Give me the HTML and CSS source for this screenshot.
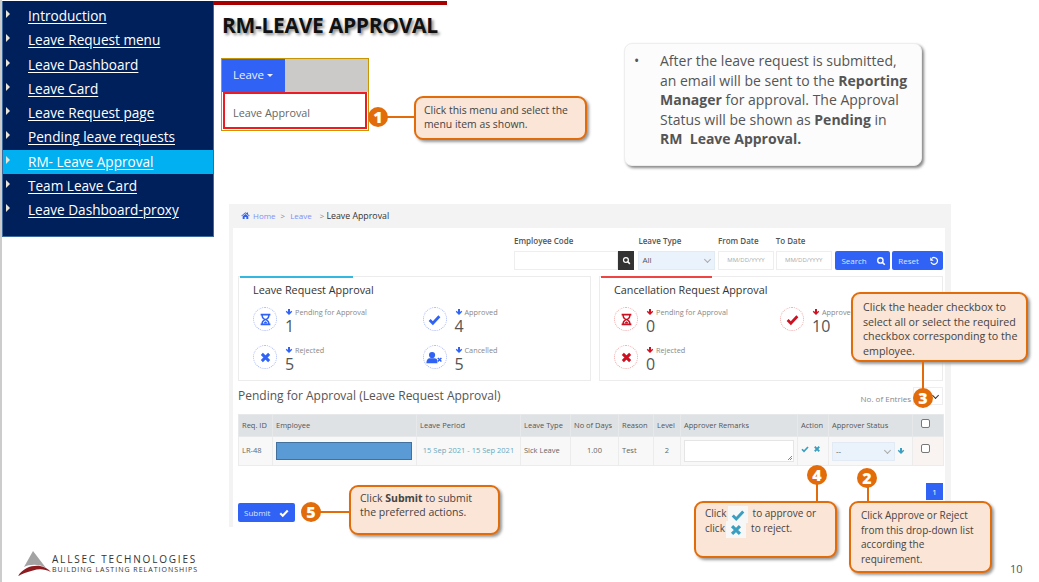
FILE: index.html
```html
<!DOCTYPE html>
<html lang="en">
<head>
    <meta charset="UTF-8">
    <meta name="viewport" content="width=device-width, initial-scale=1.0">
    <title>RM-Leave Approval</title>
    <link rel="stylesheet" href="styles.css">
</head>
<body>
    <svg class="sprite" width="0" height="0">
        <symbol id="i-check" viewBox="0 0 16 16"><path d="M2 8.500l4 4 8-8.500" fill="none" stroke="currentColor" stroke-width="3.400"/></symbol>
        <symbol id="i-times" viewBox="0 0 16 16"><path d="M3.500 3.500l9 9M12.500 3.500l-9 9" fill="none" stroke="currentColor" stroke-width="3.600"/></symbol>
        <symbol id="i-down" viewBox="0 0 16 16"><path d="M8 14L1.500 7.500 3.500 5.500 6 8V2h4v6l2.500-2.500 2 2z" fill="currentColor"/></symbol>
        <symbol id="i-hour" viewBox="0 0 16 16"><path d="M2 1h12v2h-1c0 3-1.500 4-3 5 1.500 1 3 2 3 5h1v2H2v-2h1c0-3 1.500-4 3-5-1.500-1-3-2-3-5H2zM4.800 3c0 2.500 1.700 3.500 3.200 4.200 1.500-.7 3.200-1.700 3.200-4.200zM8 8.900c-1.500.8-3.200 2-3.200 4.100h6.400c0-2.100-1.700-3.300-3.200-4.100z" fill="currentColor" fill-rule="evenodd"/><path d="M5.800 13c0-1.300 1-2.200 2.200-2.900 1.200.7 2.200 1.600 2.200 2.900z" fill="currentColor"/></symbol>
        <symbol id="i-search" viewBox="0 0 16 16"><circle cx="7" cy="7" r="4.300" fill="none" stroke="currentColor" stroke-width="2.200"/><path d="M10 10l4 4" stroke="currentColor" stroke-width="2.600"/></symbol>
        <symbol id="i-undo" viewBox="0 0 16 16"><path d="M4.500 3.800A5.400 5.400 0 1 1 3.200 10" fill="none" stroke="currentColor" stroke-width="2"/><path d="M2 2v5.500h5.500z" fill="currentColor"/></symbol>
        <symbol id="i-home" viewBox="0 0 16 16"><path d="M8 2L0.500 8.500l1 1L8 4l6.500 5.500 1-1-3-2.600V2.500h-2v1.700z" fill="currentColor"/><path d="M3 9.500L8 5.300l5 4.200V14H9.500v-3.500h-3V14H3z" fill="currentColor"/></symbol>
        <symbol id="i-user-x" viewBox="0 0 20 16"><circle cx="7" cy="5" r="3.800" fill="currentColor"/><path d="M0 15c0-4 2-6 4-6h6c2 0 3 1 3.500 2.500V15z" fill="currentColor"/><path d="M14 8.500l4.500 4.500M18.500 8.500L14 13" stroke="currentColor" stroke-width="1.800"/></symbol>
    </svg>

    <div class="slide">
        <nav class="side">
            <ul>
                <li><a>Introduction</a></li>
                <li><a>Leave Request menu</a></li>
                <li><a>Leave Dashboard</a></li>
                <li><a>Leave Card</a></li>
                <li><a>Leave Request page</a></li>
                <li><a>Pending leave requests</a></li>
                <li class="active"><a>RM- Leave Approval</a></li>
                <li><a>Team Leave Card</a></li>
                <li><a>Leave Dashboard-proxy</a></li>
            </ul>
        </nav>
        <div class="topbar"></div>
        <h1 class="title">RM-LEAVE APPROVAL</h1>

        <div class="menu-shot">
            <div class="menu-top">
                <span class="menu-btn">Leave <i class="caret"></i></span>
            </div>
            <div class="menu-item">Leave Approval</div>
        </div>

        <div class="info">
            <span class="dot">&bull;</span>
            <p>After the leave request is submitted,<br>an email will be sent to the <b>Reporting</b><br><b>Manager</b> for approval. The Approval<br>Status will be shown as <b>Pending</b> in<br><b>RM&nbsp; Leave Approval.</b></p>
        </div>

        <div class="app">
            <div class="crumbs">
                <svg class="ic-home"><use href="#i-home"/></svg>
                <a>Home</a><span class="sep">&gt;</span><a>Leave</a><span class="sep sep-2">&gt;</span><span class="here">Leave Approval</span>
            </div>
            <div class="panel">
                <div class="filters">
                    <div class="fld fld-code">
                        <label>Employee Code</label>
                        <div class="joined"><span class="inp"></span><span class="dark-btn"><svg><use href="#i-search"/></svg></span></div>
                    </div>
                    <div class="fld fld-type">
                        <label>Leave Type</label>
                        <span class="inp sel">All<i class="chev"></i></span>
                    </div>
                    <div class="fld fld-date">
                        <label>From Date</label>
                        <span class="inp date">MM/DD/YYYY</span>
                    </div>
                    <div class="fld fld-date">
                        <label>To Date</label>
                        <span class="inp date">MM/DD/YYYY</span>
                    </div>
                    <span class="btn btn-search">Search <svg><use href="#i-search"/></svg></span>
                    <span class="btn btn-reset">Reset <svg><use href="#i-undo"/></svg></span>
                </div>

                <div class="cards">
                    <section class="card card-blue">
                        <h3>Leave Request Approval</h3>
                        <div class="stats">
                            <div class="stat"><span class="ring"><svg><use href="#i-hour"/></svg></span><div><small><svg><use href="#i-down"/></svg>Pending for Approval</small><strong>1</strong></div></div>
                            <div class="stat"><span class="ring"><svg><use href="#i-check"/></svg></span><div><small><svg><use href="#i-down"/></svg>Approved</small><strong>4</strong></div></div>
                            <div class="stat"><span class="ring"><svg><use href="#i-times"/></svg></span><div><small><svg><use href="#i-down"/></svg>Rejected</small><strong>5</strong></div></div>
                            <div class="stat"><span class="ring"><svg class="wide"><use href="#i-user-x"/></svg></span><div><small><svg><use href="#i-down"/></svg>Cancelled</small><strong>5</strong></div></div>
                        </div>
                    </section>
                    <section class="card card-red">
                        <h3>Cancellation Request Approval</h3>
                        <div class="stats">
                            <div class="stat"><span class="ring"><svg><use href="#i-hour"/></svg></span><div><small><svg><use href="#i-down"/></svg>Pending for Approval</small><strong>0</strong></div></div>
                            <div class="stat"><span class="ring"><svg><use href="#i-check"/></svg></span><div><small><svg><use href="#i-down"/></svg>Approved</small><strong>10</strong></div></div>
                            <div class="stat"><span class="ring"><svg><use href="#i-times"/></svg></span><div><small><svg><use href="#i-down"/></svg>Rejected</small><strong>0</strong></div></div>
                        </div>
                    </section>
                </div>

                <div class="list-head">
                    <h2>Pending for Approval (Leave Request Approval)</h2>
                    <div class="entries">No. of Entries <span class="entries-sel"><i class="chev chev-dark"></i></span></div>
                </div>

                <table class="grid">
                    <colgroup>
                        <col class="c1"><col class="c2"><col class="c3"><col class="c4"><col class="c5"><col class="c6"><col class="c7"><col class="c8"><col class="c9"><col class="c10"><col class="c11">
                    </colgroup>
                    <thead>
                        <tr>
                            <th>Req. ID</th><th>Employee</th><th>Leave Period</th><th>Leave Type</th><th>No of Days</th><th>Reason</th><th>Level</th><th>Approver Remarks</th><th>Action</th><th>Approver Status</th><th class="mid cb-cell"><i class="cb"></i></th>
                        </tr>
                    </thead>
                    <tbody>
                        <tr>
                            <td>LR-48</td>
                            <td class="emp"><span class="mask"></span></td>
                            <td class="period">15 Sep 2021 - 15 Sep 2021</td>
                            <td>Sick Leave</td>
                            <td class="mid">1.00</td>
                            <td>Test</td>
                            <td class="mid">2</td>
                            <td class="rem"><span class="area"></span></td>
                            <td class="act"><svg><use href="#i-check"/></svg><svg><use href="#i-times"/></svg></td>
                            <td class="st"><span class="inp sel st-sel">--<i class="chev"></i></span><svg><use href="#i-down"/></svg></td>
                            <td class="mid pink cb-cell"><i class="cb"></i></td>
                        </tr>
                    </tbody>
                </table>

                <div class="pager"><span>1</span></div>
                <span class="btn btn-submit">Submit <svg><use href="#i-check"/></svg></span>
            </div>
        </div>

        <div class="callout c-1">Click this menu and select the menu item as shown.</div>
        <div class="callout c-3">Click the header checkbox to<br>select all or select the required<br>checkbox corresponding to the<br>employee.</div>
        <div class="callout c-4">
            <div class="line">Click <span class="chip"><svg><use href="#i-check"/></svg></span> to approve or</div>
            <div class="line">click <span class="chip"><svg><use href="#i-times"/></svg></span> to reject.</div>
        </div>
        <div class="callout c-2">Click Approve or Reject from this drop-down list according the requirement.</div>
        <div class="callout c-5">Click <b>Submit</b> to submit<br>the preferred actions.</div>

        <i class="wire w-1"></i><i class="wire w-3"></i><i class="wire w-4"></i><i class="wire w-2"></i><i class="wire w-5"></i>
        <span class="badge b-1">1</span>
        <span class="badge b-2">2</span>
        <span class="badge b-3">3</span>
        <span class="badge b-4">4</span>
        <span class="badge b-5">5</span>

        <div class="logo">
            <svg width="34" height="27" viewBox="0 0 34 27">
                <path d="M15 1L28 18C22 14 12 14 6 17z" fill="#a3a3a3"/>
                <path d="M0 26C5 18 14 15 22 16c4 .5 8 2.500 11 6-6-3-12-3.500-18-1.500C9 22 4 24 0 26z" fill="#8c1c20"/>
            </svg>
            <div class="logo-text">
                <div class="logo-name">ALLSEC TECHNOLOGIES</div>
                <div class="logo-tag">BUILDING LASTING RELATIONSHIPS</div>
            </div>
        </div>
        <div class="page-no">10</div>
    </div>
</body>
</html>
```

FILE: styles.css
```css
* {
    box-sizing: border-box;
}

body {
    margin: 0;
    background: white;
    font-family: "Open Sans", sans-serif;
    color: #555;
}

.sprite {
    position: absolute;
}

.slide {
    position: relative;
    width: 1039px;
    height: 582px;
    overflow: hidden;
    border-left: 2px solid #ccc;
}

/* left menu */
.side {
    position: absolute;
    left: 0;
    top: 1px;
    width: 212px;
    height: 236px;
    background: #00205c;
    border: 1px solid #3d6a9c;
    border-top: none;
}

.side ul {
    list-style: none;
    margin: 0;
    padding: 3px 0 0 0;
}

.side li {
    position: relative;
    height: 24.25px;
    padding-left: 25px;
    font-size: 13.6px;
    line-height: 24px;
    color: white;
}

.side li:before {
    content: "";
    position: absolute;
    left: 3px;
    top: 6px;
    border-left: 4px solid #e8e4d8;
    border-top: 4px solid transparent;
    border-bottom: 4px solid transparent;
}

.side li a {
    text-decoration: underline;
    text-underline-offset: 2px;
}

.side li.active {
    background: #00b0f0;
}

.topbar {
    position: absolute;
    left: 211px;
    top: 1px;
    width: 234px;
    height: 4px;
    background: #a80000;
}

.title {
    position: absolute;
    left: 220px;
    top: 10px;
    margin: 0;
    font-size: 21px;
    font-weight: 700;
    line-height: 30px;
    letter-spacing: -0.3px;
    color: #111;
    text-shadow: 2px 2px 3px #888;
}

/* cropped menu picture */
.menu-shot {
    position: absolute;
    left: 219px;
    top: 58px;
    width: 148px;
    height: 73px;
    border: 1px solid #c89600;
    background: white;
}

.menu-top {
    height: 33px;
    background: #cbcac8;
}

.menu-btn {
    display: inline-block;
    width: 63px;
    height: 33px;
    padding-left: 11px;
    background: #2f62f5;
    color: #eef;
    font-size: 11.5px;
    line-height: 31px;
}

.caret {
    display: inline-block;
    vertical-align: middle;
    border-top: 3px solid #eef;
    border-left: 3px solid transparent;
    border-right: 3px solid transparent;
}

.menu-item {
    height: 37px;
    margin: 0 1px;
    padding-left: 8px;
    border: 2px solid #ed1c24;
    font-size: 10.8px;
    line-height: 38px;
    color: #666;
}

/* info note */
.info {
    position: absolute;
    left: 622px;
    top: 43px;
    width: 298px;
    height: 123px;
    display: flex;
    padding: 7px 4px 0 9px;
    border: 1px solid #eee;
    border-radius: 8px;
    background: #fcfcfc;
    box-shadow: 2px 2px 3px #888;
    font-size: 14px;
    line-height: 19.5px;
    color: #555;
    white-space: nowrap;
}

.info .dot {
    width: 26px;
    flex: none;
}

.info p {
    margin: 0;
}

/* app screenshot */
.app {
    position: absolute;
    left: 227px;
    top: 204px;
    width: 722px;
    height: 323px;
    background: #f3f3f3;
    padding-left: 4px;
    padding-right: 6px;
    display: flex;
    flex-direction: column;
}

.crumbs {
    height: 23px;
    margin-bottom: 1px;
    display: flex;
    align-items: center;
    padding-left: 8px;
    font-size: 8px;
    color: #88f;
}

.crumbs a {
    color: #7f8ff7;
}

.ic-home {
    width: 9px;
    height: 9px;
    margin-right: 3px;
    color: #2f62f5;
}

.sep {
    margin: 0 5px;
    color: #888;
}

.sep-2 {
    margin-left: 8px;
    margin-right: 2px;
}

.here {
    color: #333;
    font-size: 8.8px;
}

.panel {
    position: relative;
    flex: 1;
    background: white;
    padding: 0 2px 0 5px;
}

.filters {
    height: 48px;
    display: flex;
    align-items: flex-end;
    padding: 0 0 6px 276px;
    font-size: 8px;
}

.fld label {
    display: block;
    margin-bottom: 5px;
    font-size: 8px;
    line-height: 10px;
    font-weight: 600;
    color: #555;
}

.fld-code {
    width: 125px;
}

.fld-type {
    width: 80px;
}

.fld-date {
    width: 58px;
}

.joined {
    display: flex;
}

.inp {
    display: block;
    height: 19px;
    border: 1px solid #eee;
    background: white;
    font-size: 8px;
    line-height: 15px;
}

.joined .inp {
    width: 104px;
}

.dark-btn {
    width: 16px;
    height: 19px;
    background: #333;
    color: white;
    display: flex;
    align-items: center;
    justify-content: center;
}

.dark-btn svg {
    width: 9px;
    height: 9px;
}

.sel {
    position: relative;
    width: 77px;
    padding-left: 3px;
    background: #eaf2fb;
    border-color: #e2eaf5;
    color: #555;
}

.chev {
    position: absolute;
    right: 4px;
    top: 5px;
    width: 5px;
    height: 5px;
    border-right: 1px solid #aaa;
    border-bottom: 1px solid #aaa;
    transform: rotate(45deg);
}

.date {
    width: 56px;
    text-align: center;
    font-size: 6px;
    line-height: 17px;
    color: #aaa;
}

.btn {
    display: flex;
    align-items: center;
    justify-content: space-between;
    height: 19px;
    padding: 0 4px 0 6px;
    border-radius: 2px;
    background: #2f62f5;
    color: #dde4ff;
    font-size: 8px;
}

.btn svg {
    width: 10px;
    height: 10px;
    color: white;
}

.btn-search {
    width: 55px;
    margin-left: 2px;
}

.btn-reset {
    width: 51px;
    margin-left: 2px;
}

/* stat cards */
.cards {
    display: flex;
    gap: 8px;
}

.card {
    position: relative;
    height: 105px;
    border: 1px solid #ececec;
}

.card:before {
    content: "";
    position: absolute;
    left: 1px;
    top: -1px;
    width: 113px;
    height: 2px;
    background: #35b8e0;
}

.card-blue {
    width: 353px;
    padding-left: 14px;
}

.card-red {
    width: 344px;
    padding-left: 14px;
}

.card-red:before {
    background: #ee4444;
    width: 111px;
}

.card h3 {
    margin: 0;
    padding-top: 5px;
    font-size: 10.8px;
    line-height: 15px;
    font-weight: 400;
    color: #333;
}

.stats {
    display: grid;
    grid-auto-rows: 38px;
    padding-top: 10px;
}

.card-blue .stats {
    grid-template-columns: 169.5px 140px;
}

.card-red .stats {
    grid-template-columns: 166px 140px;
}

.stat {
    display: flex;
    gap: 8px;
}

.ring {
    width: 24px;
    height: 24px;
    flex: none;
    display: flex;
    align-items: center;
    justify-content: center;
    border: 1px dotted #a8b8f8;
    border-radius: 50%;
    color: #2f62f5;
}

.ring svg {
    width: 13px;
    height: 13px;
}

.ring svg.wide {
    width: 17px;
}

.card-red .ring {
    border-color: #f0a8a8;
    color: #cc1122;
}

.stat small {
    display: flex;
    align-items: center;
    gap: 2px;
    height: 10px;
    font-size: 7.3px;
    line-height: 10px;
    color: #888;
}

.stat small svg {
    width: 8px;
    height: 8px;
    color: #2f62f5;
}

.card-red small svg {
    color: #cc1122;
}

.stat strong {
    display: block;
    font-size: 16px;
    line-height: 18px;
    font-weight: 400;
    color: #555;
}

/* list */
.list-head {
    height: 33px;
    display: flex;
    justify-content: space-between;
    align-items: flex-end;
    padding-bottom: 10px;
}

.list-head h2 {
    margin: 0;
    font-size: 12px;
    line-height: 16px;
    font-weight: 400;
    color: #555;
}

.entries {
    display: flex;
    align-items: flex-start;
    font-size: 8px;
    color: #888;
}

.entries-sel {
    position: relative;
    display: block;
    width: 30px;
    height: 18px;
    margin: -6px 0 -4px 2px;
    border: 1px solid #eee;
}

.chev-dark {
    border-color: #333;
}

.grid {
    width: 705px;
    border-collapse: collapse;
    table-layout: fixed;
    font-size: 7.5px;
}

.c1 { width: 34px; }
.c2 { width: 144px; }
.c3 { width: 104px; }
.c4 { width: 50px; }
.c5 { width: 48px; }
.c6 { width: 35px; }
.c7 { width: 27px; }
.c8 { width: 117px; }
.c9 { width: 31px; }
.c10 { width: 84px; }
.c11 { width: 31px; }

.grid th {
    height: 22px;
    padding: 0 3px 2px 3px;
    background: #dfe2e5;
    font-weight: 400;
    text-align: left;
    color: #555;
    border: 1px solid #e6e8ea;
    white-space: nowrap;
    overflow: hidden;
}

.grid td {
    height: 29px;
    padding: 0 3px 2px 3px;
    background: #f8f8f8;
    color: #666;
    border: 1px solid #ececec;
    white-space: nowrap;
    overflow: hidden;
}

.grid .mid {
    text-align: center;
}

.grid td.pink {
    background: #f9f3f2;
}

.grid .cb-cell {
    padding: 0 6px 6px 0;
}

.cb {
    display: inline-block;
    width: 9px;
    height: 9px;
    vertical-align: middle;
    border: 1px solid #777;
    border-radius: 2px;
    background: white;
}

.grid .emp {
    padding: 0 3px;
}

.mask {
    display: block;
    width: 136px;
    height: 18px;
    background: #5b9bd5;
    border: 1px solid #41719c;
}

.grid .period {
    color: #6aa8c0;
    text-align: center;
}

.grid .rem {
    padding: 0 3px;
}

.area {
    position: relative;
    display: block;
    height: 22px;
    border: 1px solid #e5e5e5;
    background: white;
}

.area:after {
    content: "";
    position: absolute;
    right: 1px;
    bottom: 1px;
    width: 5px;
    height: 5px;
    background: linear-gradient(135deg, transparent 50%, #888 50%, #888 60%, transparent 60%, transparent 75%, #888 75%, #888 85%, transparent 85%);
}

.act svg {
    width: 8px;
    height: 8px;
    margin-right: 4px;
    color: #3a9ec0;
}

.grid .st {
    padding: 0 3px;
}

.st-sel {
    display: inline-block;
    vertical-align: middle;
    width: 63px;
    margin-right: 2px;
}

.st svg {
    width: 8px;
    height: 8px;
    vertical-align: middle;
    color: #3a9ec0;
}

.pager {
    display: flex;
    justify-content: flex-end;
    padding-top: 17px;
}

.pager span {
    width: 17px;
    height: 17px;
    background: #2f62f5;
    color: white;
    font-size: 8px;
    line-height: 17px;
    text-align: center;
}

.btn-submit {
    width: 57px;
    margin-top: 3px;
    padding-right: 6px;
}

/* callouts over the slide */
.callout {
    position: absolute;
    border: 2px solid #e36c0a;
    border-radius: 9px;
    background: #fbe5d6;
    box-shadow: 2px 2px 3px #999;
    font-size: 10px;
    line-height: 14.5px;
    color: #444;
}

.c-1 {
    left: 412px;
    top: 96px;
    width: 173px;
    height: 44px;
    padding: 5px 8px;
    font-size: 10.4px;
    line-height: 14px;
}

.c-3 {
    left: 849px;
    top: 292px;
    width: 177px;
    height: 70px;
    padding: 6px 10px;
    font-size: 10.7px;
    white-space: nowrap;
}

.c-4 {
    left: 692px;
    top: 501px;
    width: 143px;
    height: 57px;
    padding: 3px 9px;
}

.c-2 {
    left: 847px;
    top: 501px;
    width: 143px;
    height: 72px;
    padding: 5px 10px;
}

.c-5 {
    left: 347px;
    top: 485px;
    width: 151px;
    height: 50px;
    padding: 4px 9px;
    font-size: 10.5px;
    line-height: 14px;
}

.line {
    height: 15px;
    white-space: nowrap;
}

.chip {
    display: inline-flex;
    align-items: center;
    justify-content: center;
    width: 20px;
    height: 17px;
    margin: 0 2px 0 -1px;
    vertical-align: middle;
    background: #f7f7f7;
    color: #3a9ec0;
}

.chip svg {
    width: 14px;
    height: 14px;
}

.wire {
    position: absolute;
    background: #e36c0a;
}

.w-1 { left: 384px; top: 116px; width: 28px; height: 2px; }
.w-3 { left: 920px; top: 362px; width: 2px; height: 30px; }
.w-4 { left: 814px; top: 482px; width: 2px; height: 19px; }
.w-2 { left: 865px; top: 482px; width: 2px; height: 19px; }
.w-5 { left: 316px; top: 511px; width: 31px; height: 2px; }

.badge {
    position: absolute;
    width: 20px;
    height: 20px;
    border-radius: 50%;
    background: #e36c0a;
    color: white;
    font-size: 16px;
    font-weight: 800;
    line-height: 20px;
    text-align: center;
}

.b-1 { left: 366px; top: 107px; }
.b-2 { left: 855px; top: 468px; }
.b-3 { left: 911px; top: 388px; }
.b-4 { left: 805px; top: 465px; }
.b-5 { left: 299px; top: 502px; }

/* footer */
.logo {
    position: absolute;
    left: 16px;
    top: 550px;
    display: flex;
}

.logo-text {
    padding-top: 3px;
    color: #333;
}

.logo-name {
    font-size: 10px;
    line-height: 12px;
    letter-spacing: 1.8px;
}

.logo-tag {
    font-size: 7px;
    line-height: 9px;
    letter-spacing: 1px;
}

.page-no {
    position: absolute;
    left: 1008px;
    top: 561px;
    font-size: 11px;
    color: #555;
}
```
